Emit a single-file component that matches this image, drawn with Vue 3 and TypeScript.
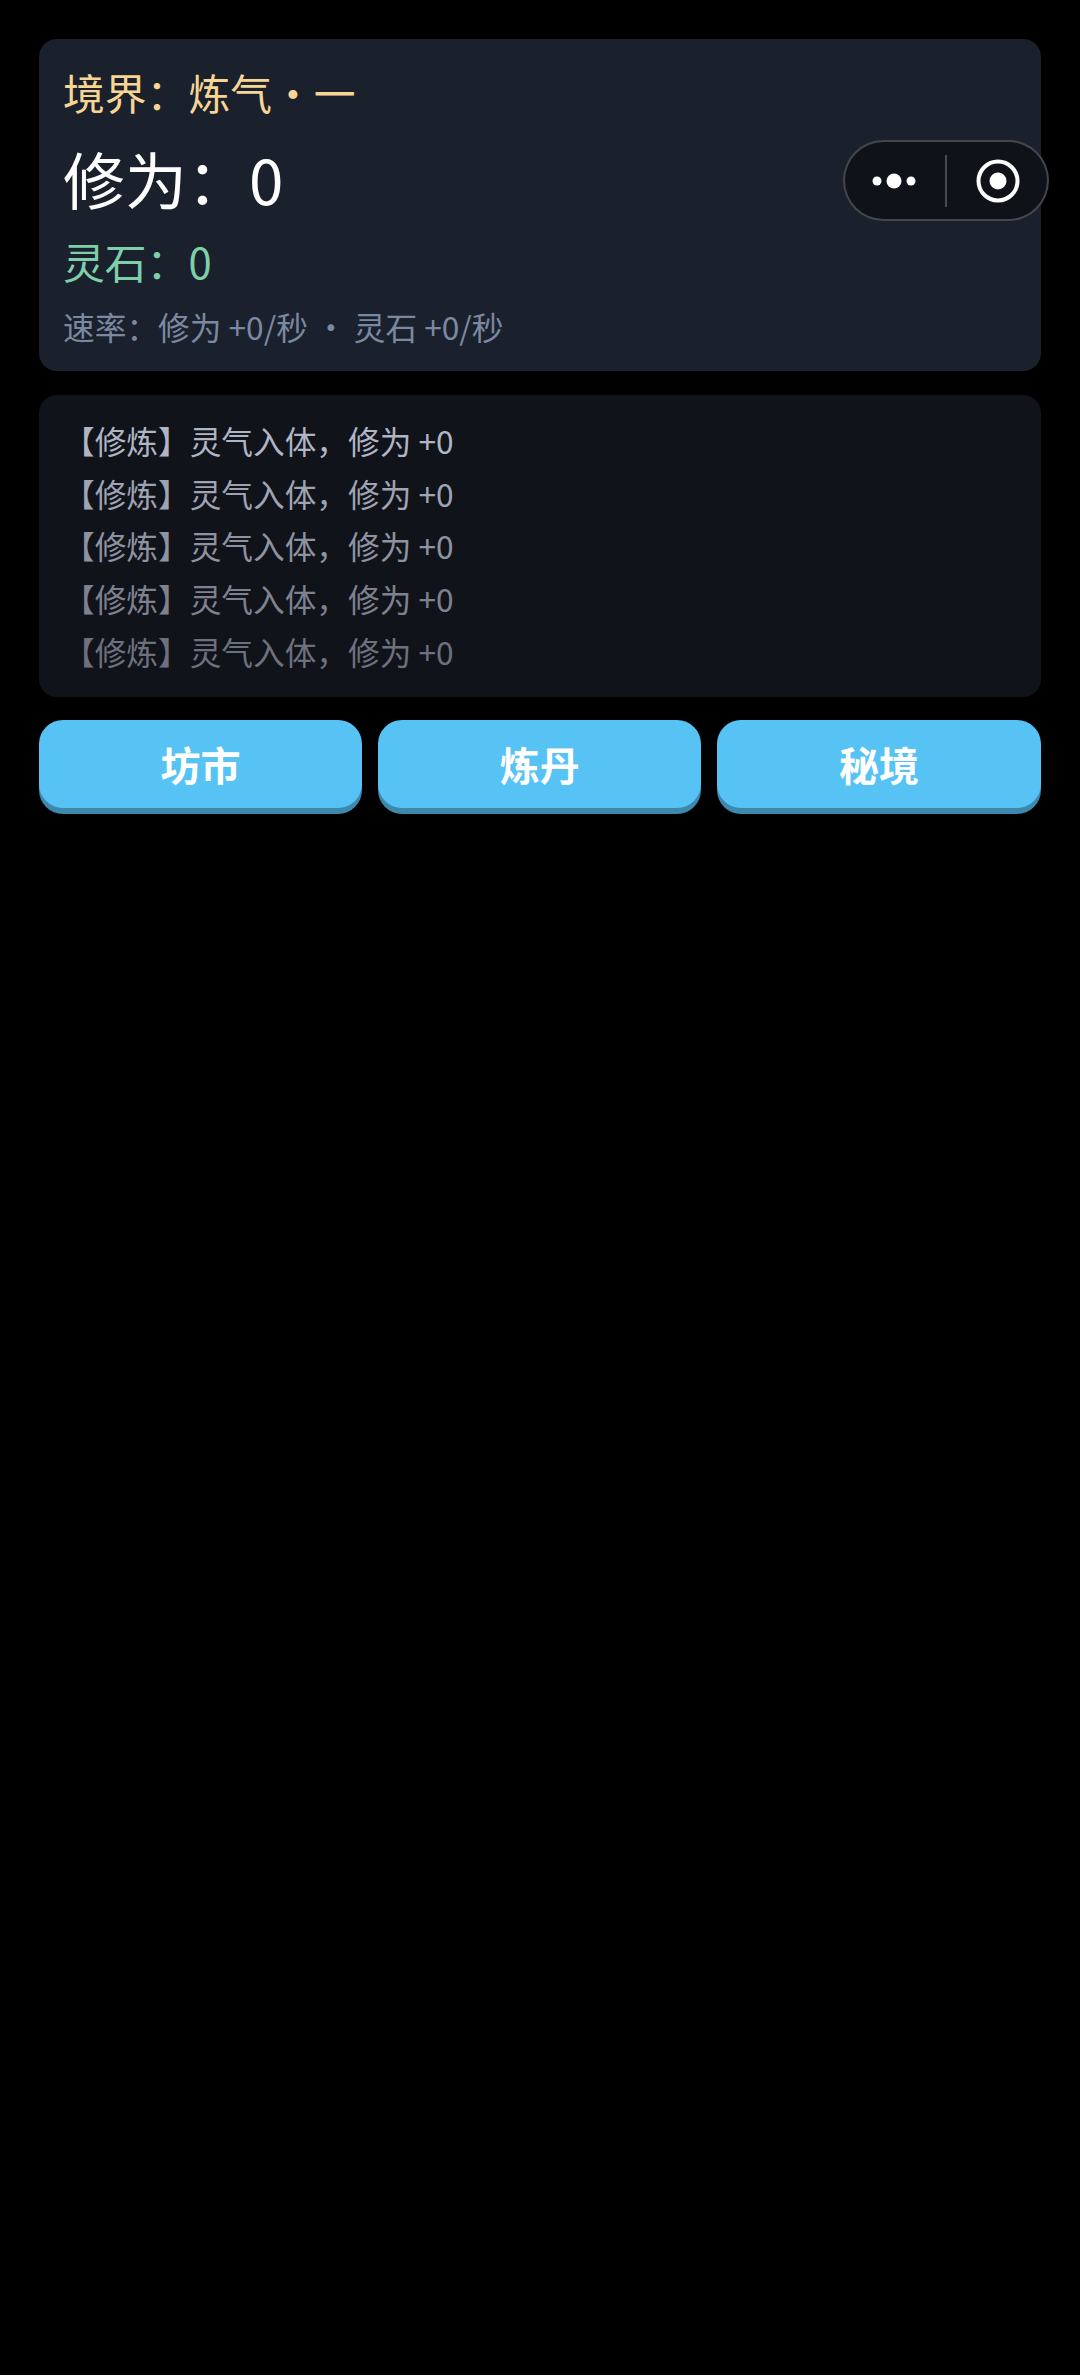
<script setup lang="ts">
const logs: number[] = [0.95, 0.85, 0.75, 0.65, 0.55]
const actions: string[] = ['坊市', '炼丹', '秘境']
</script>

<template>
  <main class="page">
    <section class="stats">
      <div class="realm">境界：炼气·一</div>
      <div class="cultivation">修为：0</div>
      <div class="stones">灵石：0</div>
      <div class="rates">速率：修为 +0/秒 · 灵石 +0/秒</div>
    </section>

    <section class="log">
      <div v-for="(o, i) in logs" :key="i" class="log-line" :style="{ opacity: o }">【修炼】灵气入体，修为 +0</div>
    </section>

    <nav class="actions">
      <button v-for="a in actions" :key="a" class="action" type="button">{{ a }}</button>
    </nav>

    <div class="capsule">
      <svg class="capsule-more" width="44" height="16" viewBox="0 0 44 16" aria-hidden="true">
        <circle cx="5" cy="8" r="4.5" fill="#fff" />
        <circle cx="22" cy="8" r="7.5" fill="#fff" />
        <circle cx="39" cy="8" r="4.5" fill="#fff" />
      </svg>
      <span class="capsule-divider"></span>
      <svg class="capsule-close" width="44" height="44" viewBox="0 0 44 44" aria-hidden="true">
        <circle cx="22" cy="22" r="19.5" fill="none" stroke="#fff" stroke-width="4" />
        <circle cx="22" cy="22" r="8.5" fill="#fff" />
      </svg>
    </div>
  </main>
</template>

<style scoped>
.page {
  position: relative;
  box-sizing: border-box;
  min-height: 2375px;
  padding: 39px 39.5px 0 39px;
  display: flex;
  flex-direction: column;
  background: #000;
  font-family: "Noto Sans CJK SC", "Noto Sans", sans-serif;
}
.stats {
  box-sizing: border-box;
  height: 332px;
  padding: 28px 24px 0 24px;
  border-radius: 18px;
  background: #1a202c;
}
.realm {
  font-size: 41.8px;
  line-height: 50px;
  color: #f7d695;
}
.cultivation {
  margin-top: 22px;
  font-size: 62px;
  line-height: 78px;
  color: #fff;
}
.stones {
  margin-top: 19px;
  font-size: 41.8px;
  line-height: 50px;
  color: #7dd0a9;
}
.rates {
  margin-top: 18px;
  font-size: 31.7px;
  line-height: 44px;
  color: #7a89a1;
}
.log {
  box-sizing: border-box;
  height: 302px;
  margin-top: 24px;
  padding: 19px 24px 0 24px;
  border-radius: 18px;
  background: #10131a;
}
.log-line {
  font-size: 31.68px;
  line-height: 52.67px;
  color: #b9bece;
}
.actions {
  display: flex;
  gap: 16px;
  margin-top: 23px;
}
.action {
  flex: 1 1 0;
  height: 88px;
  margin-bottom: 6px;
  padding: 0;
  border: 0;
  border-radius: 24px;
  background: #57c3f5;
  box-shadow: 0 6px 0 #3d88ad;
  color: #fff;
  font-family: inherit;
  font-size: 40px;
  font-weight: 700;
  line-height: 88px;
}
.capsule {
  position: absolute;
  top: 140px;
  left: 843px;
  box-sizing: border-box;
  width: 206px;
  height: 81px;
  display: flex;
  align-items: center;
  border: 2px solid rgba(255, 255, 255, 0.22);
  border-radius: 40.5px;
  background: #10121a;
}
.capsule-more {
  margin-left: 27px;
}
.capsule-divider {
  width: 2px;
  height: 52px;
  margin-left: 29px;
  background: rgba(255, 255, 255, 0.24);
}
.capsule-close {
  margin-left: 29px;
}
</style>

<style>
html,
body {
  background: #000;
}
</style>
